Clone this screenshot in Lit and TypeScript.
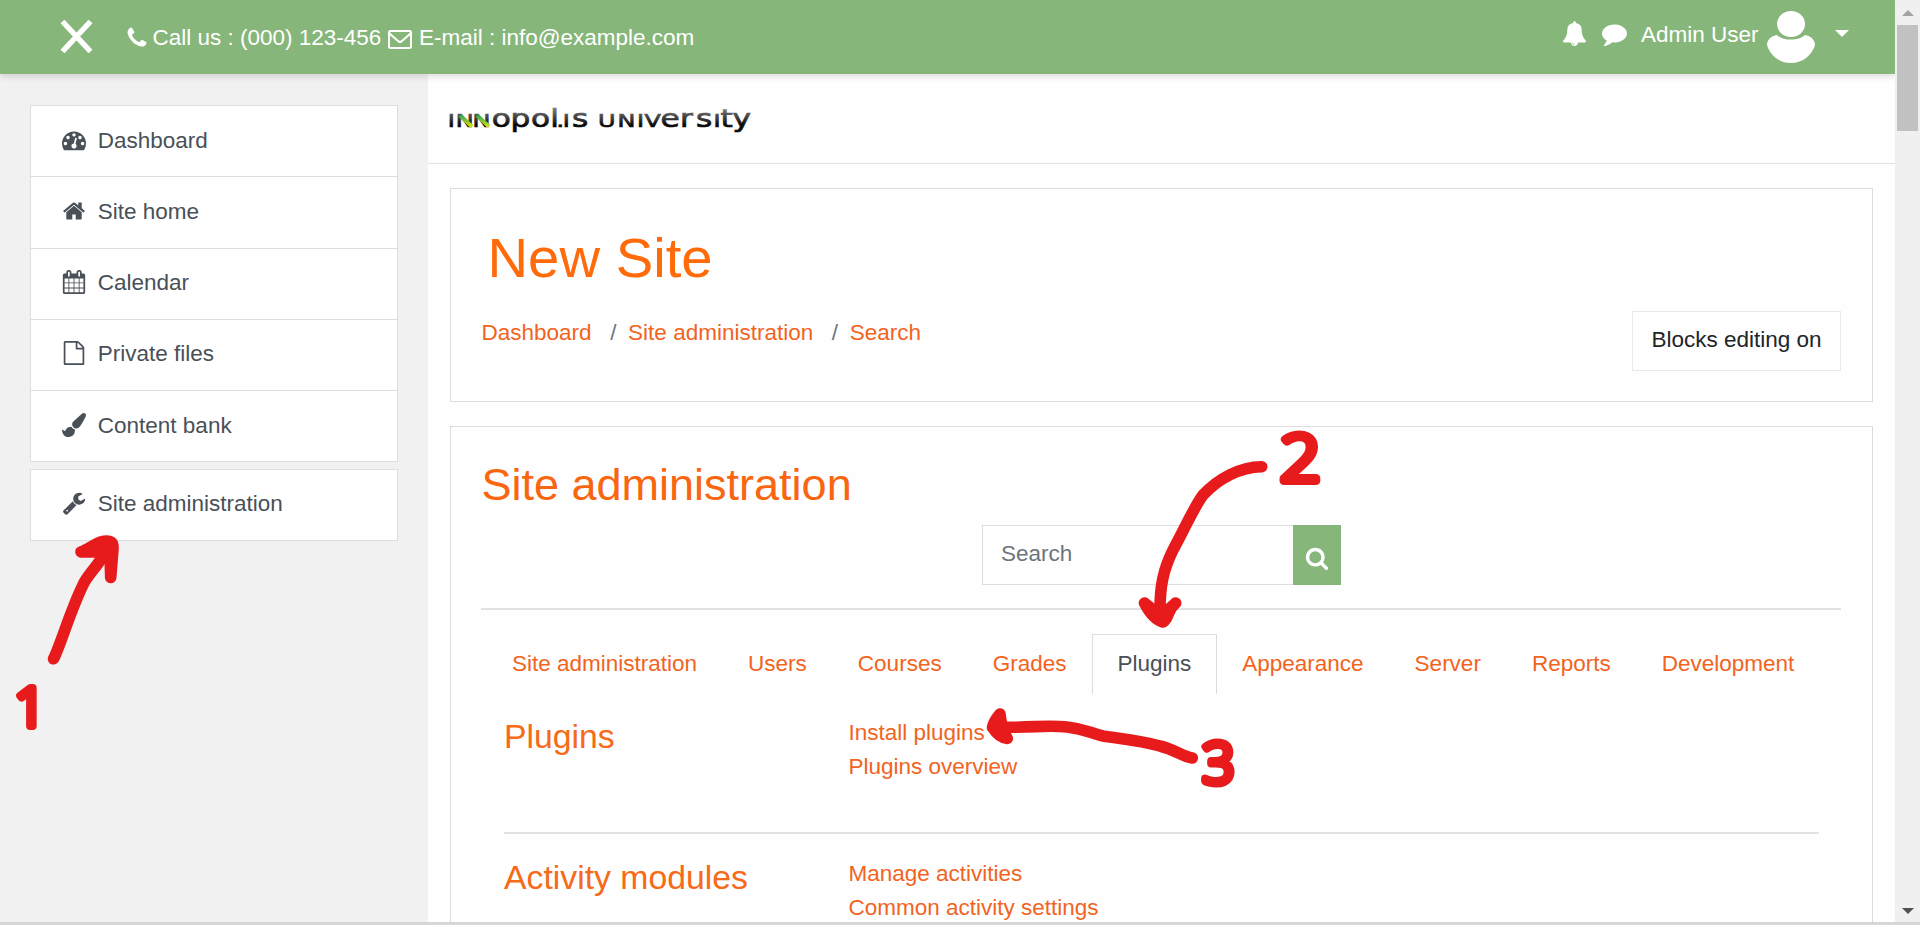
import { LitElement, html, svg, css } from "lit";
import { customElement, property } from "lit/decorators.js";

const ICONS: Record<string, string> = {
  dashboard:
    "M384 1152q0-53-37.5-90.5t-90.5-37.5-90.5 37.5-37.5 90.5 37.5 90.5 90.5 37.5 90.5-37.5 37.5-90.5zm192-448q0-53-37.5-90.5t-90.5-37.5-90.5 37.5-37.5 90.5 37.5 90.5 90.5 37.5 90.5-37.5 37.5-90.5zm428 481l101-382q6-26-7.5-48.5t-38.5-29.5-48 6.5-30 39.5l-101 382q-60 5-107 43.5t-63 98.5q-20 77 20 146t117 89 146-20 89-117q16-60-6-117t-72-91zm660-33q0-53-37.5-90.5t-90.5-37.5-90.5 37.5-37.5 90.5 37.5 90.5 90.5 37.5 90.5-37.5 37.5-90.5zm-640-640q0-53-37.5-90.5t-90.5-37.5-90.5 37.5-37.5 90.5 37.5 90.5 90.5 37.5 90.5-37.5 37.5-90.5zm448 192q0-53-37.5-90.5t-90.5-37.5-90.5 37.5-37.5 90.5 37.5 90.5 90.5 37.5 90.5-37.5 37.5-90.5zm320 448q0 261-141 483-19 29-54 29h-1402q-35 0-54-29-141-221-141-483 0-182 71-348t191-286 286-191 348-71 348 71 286 191 191 286 71 348z",
  home:
    "M1472 992v480q0 26-19 45t-45 19h-384v-384h-256v384h-384q-26 0-45-19t-19-45v-480q0-1 .5-3t.5-3l575-474 575 474q1 2 1 6zm223-69l-62 74q-8 9-21 11h-3q-13 0-21-7l-692-577-692 577q-12 8-24 7-13-2-21-11l-62-74q-8-10-7-23.5t11-21.5l719-599q32-26 76-26t76 26l244 204v-195q0-14 9-23t23-9h192q14 0 23 9t9 23v408l219 182q10 8 11 21.5t-7 23.5z",
  calendar:
    "M192 1664h288v-288h-288v288zm352 0h320v-288h-320v288zm-352-352h288v-320h-288v320zm352 0h320v-320h-320v320zm-352-384h288v-288h-288v288zm736 736h320v-288h-320v288zm-384-736h320v-288h-320v288zm768 736h288v-288h-288v288zm-384-352h320v-320h-320v320zm-352-864v-288q0-13-9.5-22.5t-22.5-9.5h-64q-13 0-22.5 9.5t-9.5 22.5v288q0 13 9.5 22.5t22.5 9.5h64q13 0 22.5-9.5t9.5-22.5zm736 864h288v-320h-288v320zm-384-384h320v-288h-320v288zm384 0h288v-288h-288v288zm32-480v-288q0-13-9.5-22.5t-22.5-9.5h-64q-13 0-22.5 9.5t-9.5 22.5v288q0 13 9.5 22.5t22.5 9.5h64q13 0 22.5-9.5t9.5-22.5zm384-64v1280q0 52-38 90t-90 38h-1408q-52 0-90-38t-38-90v-1280q0-52 38-90t90-38h128v-96q0-66 47-113t113-47h64q66 0 113 47t47 113v96h384v-96q0-66 47-113t113-47h64q66 0 113 47t47 113v96h128q52 0 90 38t38 90z",
  file:
    "M1596 380q28 28 48 76t20 88v1152q0 40-28 68t-68 28h-1344q-40 0-68-28t-28-68v-1600q0-40 28-68t68-28h896q40 0 88 20t76 48zm-444-244v376h376q-10-29-22-41l-313-313q-12-12-41-22zm384 1528v-1024h-416q-40 0-68-28t-28-68v-416h-768v1536h1280z",
  brush:
    "M1615 0q70 0 122.5 46.5t52.5 116.5q0 63-45 151-332 629-465 752-97 91-218 91-126 0-216.5-92.5t-90.5-219.5q0-128 92-212l638-579q59-54 130-54zm-909 1034q39 76 106.5 130t150.5 76l1 71q4 213-129.5 347t-348.5 134q-123 0-218-46.5t-152.5-127.5-86.5-183-29-220q7 5 41 30t62 44.5 59 36.5 46 17q41 0 55-37 25-66 57.5-112.5t69.5-76 88-47.5 103-25.5 125-10.5z",
  wrench:
    "M448 1472q0-26-19-45t-45-19-45 19-19 45 19 45 45 19 45-19 19-45zm644-420l-682 682q-37 37-90 37-52 0-91-37l-106-108q-38-36-38-90 0-53 38-91l681-681q39 98 114.5 173.5t173.5 114.5zm634-435q0 39-23 106-47 134-164.5 217.5t-258.5 83.5q-185 0-316.5-131.5t-131.5-316.5 131.5-316.5 316.5-131.5q58 0 121.5 16.5t107.5 46.5q16 11 16 28t-16 28l-293 169v224l193 107q5-3 79-48.5t135.5-81 70.5-35.5q15 0 23.5 10t8.5 25z",
  bell:
    "M912 1696q0-16-16-16-59 0-101.5-42.5t-42.5-101.5q0-16-16-16t-16 16q0 73 51.5 124.5t124.5 51.5q16 0 16-16zm816-288q0 52-38 90t-90 38h-448q0 106-75 181t-181 75-181-75-75-181h-448q-52 0-90-38t-38-90q50-42 91-88t85-119.5 74.5-158.5 50-206 19.5-260q0-152 117-282.5t307-158.5q-8-19-8-39 0-40 28-68t68-28 68 28 28 68q0 20-8 39 190 28 307 158.5t117 282.5q0 139 19.5 260t50 206 74.5 158.5 85 119.5 91 88z",
  comment:
    "M1792 896q0 174-120 321.5t-326 233-450 85.5q-70 0-145-8-198 175-460 242-49 14-114 22-17 2-30.5-9t-17.5-29v-1q-3-4-.5-12t2-10 4.5-9.5l6-9 7-8.5 8-9q7-8 31-34.5t34.5-38 31-39.5 32.5-51 27-59 26-76q-157-89-247.5-220t-90.5-281q0-130 71-248.5t191-204.5 286-136.5 348-50.5q244 0 450 85.5t326 233 120 321.5z",
  phone:
    "M1600 1240q0 27-10 70.5t-21 68.5q-21 50-122 106-94 51-186 51-27 0-53-3.5t-57.5-12.5-47-14.5-55.5-20.5-49-18q-98-35-175-83-127-79-264-216t-216-264q-48-77-83-175-3-9-18-49t-20.5-55.5-14.5-47-12.5-57.5-3.5-53q0-92 51-186 56-101 106-122 25-11 68.5-21t70.5-10q14 0 21 3 18 6 53 76 11 19 30 54t35 63.5 31 53.5q3 4 17.5 25t21.5 35.5 7 28.5q0 20-28.5 50t-62 55-62 53-28.5 46q0 9 5 22.5t8.5 20.5 14 24 11.5 19q76 137 174 235t235 174q2 1 19 11.5t24 14 20.5 8.5 22.5 5q18 0 46-28.5t53-62 55-62 50-28.5q14 0 28.5 7t35.5 21.5 25 17.5q25 15 53.5 31t63.5 35 54 30q70 35 76 53 3 7 3 21z",
  search:
    "M1216 832q0-185-131.5-316.5t-316.5-131.5-316.5 131.5-131.5 316.5 131.5 316.5 316.5 131.5 316.5-131.5 131.5-316.5zm512 832q0 52-38 90t-90 38q-54 0-90-38l-343-342q-179 124-399 124-143 0-273.5-55.5t-225-150-150-225-55.5-273.5 55.5-273.5 150-225 225-150 273.5-55.5 273.5 55.5 225 150 150 225 55.5 273.5q0 220-124 399l343 343q37 37 37 90z",
};

@customElement("ui-icon")
class UiIcon extends LitElement {
  @property() name = "";
  static styles = css`
    :host { display: block; flex: none; width: 24px; height: 24px; }
    svg { display: block; width: 100%; height: 100%; fill: currentColor; }
  `;
  render() {
    return html`<svg viewBox="0 0 1792 1792"><path d=${ICONS[this.name] ?? ""}></path></svg>`;
  }
}

const NAV_GROUPS = [
  [
    ["dashboard", "Dashboard"],
    ["home", "Site home"],
    ["calendar", "Calendar"],
    ["file", "Private files"],
    ["brush", "Content bank"],
  ],
  [["wrench", "Site administration"]],
];

const TABS = ["Site administration", "Users", "Courses", "Grades", "Plugins", "Appearance", "Server", "Reports", "Development"];

const SECTIONS = [
  { title: "Plugins", links: ["Install plugins", "Plugins overview"] },
  { title: "Activity modules", links: ["Manage activities", "Common activity settings"] },
];

// Wordmark letters: horizontal origin and letter; capitals are set at x-height.
const STRETCH = 1.3;
const WORDMARK: [number, string][] = [
  [447.7, "I"], [455.8, "N"], [472.6, "N"], [491.7, "o"], [510.5, "p"], [531, "o"], [550.3, "l"],
  [556.5, "."], [562.7, "I"], [572, "s"], [598, "U"], [617.5, "N"], [637, "I"], [644.5, "V"],
  [660.5, "e"], [680, "r"], [696, "s"], [713.5, "I"], [720.5, "t"], [732.5, "y"],
];

@customElement("app-root")
class AppRoot extends LitElement {
  static styles = css`
    * { box-sizing: border-box; }
    :host {
      display: grid;
      grid-template-columns: 1fr 25px;
      grid-template-rows: 922px 3px;
      position: relative;
      width: 100%;
      height: 925px;
      overflow: hidden;
      background: #fefefe;
      font: 22.5px/33.75px "Liberation Sans", Arial, sans-serif;
      color: #212529;
    }
    a { color: #f1641e; text-decoration: none; white-space: nowrap; }
    .page { display: flex; flex-direction: column; min-width: 0; overflow: hidden; }
    .topbar {
      display: flex;
      flex: none;
      height: 74px;
      padding: 0 46px 0 60px;
      background: #87b67b;
      color: #fff;
      box-shadow: 0 3px 6px rgba(0, 0, 0, 0.12);
      z-index: 1;
      white-space: nowrap;
    }
    .close { width: 33px; height: 33px; margin: 20px 31.5px 0 0; }
    .phone { width: 24px; height: 24px; margin: 25.5px 4px 0 0; }
    .topbar .contact { padding-top: 21.4px; }
    .mail { width: 24px; height: 19px; margin: 29.5px 7px 0 6.5px; }
    .grow { flex: 1; }
    .bell { width: 25px; height: 25px; margin: 20.5px 15px 0 0; }
    .comment { width: 25px; height: 25px; margin: 21px 13.5px 0 0; }
    .user { padding-top: 18px; }
    .avatar { width: 48px; height: 52px; margin: 11px 20px 0 8.5px; }
    .caret { width: 14px; height: 7px; margin-top: 30px; }
    .body { display: flex; flex: 1; min-height: 0; }
    .drawer {
      display: flex;
      flex-direction: column;
      gap: 6.5px;
      flex: none;
      width: 427.5px;
      padding: 31px 30px;
      background: #f1f1f1;
    }
    .group { border: 1px solid #dcdddf; background: #fff; }
    .item {
      display: flex;
      align-items: flex-start;
      height: 71.25px;
      padding: 17.5px 0 0 30.5px;
      color: #495057;
      border-top: 1px solid #dcdddf;
    }
    .item:first-child { border-top: 0; height: 70.25px; padding-top: 18px; }
    .item:only-child { padding-top: 17px; }
    .item ui-icon { margin: 4px 12.3px 0 0; }
    .main { flex: 1; min-width: 0; }
    .brand { height: 90px; border-bottom: 1px solid #dee2e6; padding: 21.5px 0 0 18.5px; }
    .brand svg { display: block; width: 306px; height: 50px; overflow: visible; }
    .wordmark { font-family: "DejaVu Sans", sans-serif; }
    .card { margin: 24px 22px 0 22px; border: 1px solid #dcdddf; padding: 0 31px 0 30.5px; }
    .heading { height: 214px; display: grid; grid-template-columns: 1fr auto; grid-template-rows: 122px auto; }
    h1, h2, h3 { margin: 0; font-weight: 400; color: #ff6a0a; white-space: nowrap; }
    h1 { grid-column: 1 / 3; font-size: 56.25px; line-height: 68px; padding: 35px 0 0 6.5px; }
    .crumbs { display: flex; gap: 11.7px; padding: 5.3px 0 0 0.5px; }
    .crumbs .sep { color: #6c757d; margin-left: 6.9px; }
    .button {
      width: 209px;
      height: 60px;
      border: 1px solid #e9e9ea;
      padding: 11px 0 0 18.5px;
      white-space: nowrap;
    }
    .admin { height: 560px; }
    h2 { font-size: 45px; line-height: 54px; padding: 31px 0 0 0.5px; height: 98px; color: #fa6610; }
    .searchbar { display: flex; width: 359px; height: 60px; margin-left: 500.5px; }
    .field { flex: 1; border: 1px solid #dcdddf; border-right: 0; padding: 11px 0 0 18.5px; color: #6c757d; }
    .go { width: 48px; background: #87b67b; color: #fff; padding: 20.5px 0 0 12px; }
    .go ui-icon { width: 24px; height: 24px; }
    .rule { height: 2px; background: #e2e2e3; }
    .rule.top { margin: 23px 0 24px; }
    .tabs { display: flex; margin-left: 5.5px; height: 60px; }
    .tab { padding: 12px 24.5px 0; border: 1px solid transparent; border-bottom: 0; }
    .tab.active { color: #495057; border-color: #dcdddf; }
    .section { display: grid; grid-template-columns: 344.5px 1fr; margin: 0 22px 0 23px; height: 117px; }
    .section + .rule { margin: 0 22px 22px 23px; }
    .section.first { margin-top: 21px; }
    h3 { font-size: 33.75px; line-height: 41px; color: #f66a18; padding-top: 0.5px; }
    .links { display: flex; flex-direction: column; padding-top: 1px; }
    .scroll { display: flex; flex-direction: column; align-items: center; background: #f0f0f0; padding: 10px 0 8px; }
    .scroll svg { display: block; width: 12px; height: 6px; }
    .thumb { width: 21px; height: 106px; margin-top: 9px; background: #c1c1c1; }
    .bottom { grid-column: 1 / 3; background: #d6d6d6; }
    .ink { position: absolute; inset: 0; width: 1920px; height: 925px; z-index: 2; pointer-events: none; }
    .ink path { fill: none; stroke: #e81b1c; stroke-width: 11.6; stroke-linecap: round; stroke-linejoin: round; }
    .ink path.tip { fill: #e81b1c; }
    .ink text { font-family: "Open Sans", sans-serif; font-weight: 300; fill: #e81b1c; stroke: #e81b1c; stroke-width: 8; stroke-linejoin: round; }
  `;

  private logo() {
    return html`<svg viewBox="446 95 306 50">
      <defs>
        <linearGradient id="metal" x1="0" y1="108" x2="0" y2="134" gradientUnits="userSpaceOnUse">
          <stop offset="0" stop-color="#777"></stop>
          <stop offset=".35" stop-color="#3a3a3a"></stop>
          <stop offset=".6" stop-color="#0a0a0a"></stop>
        </linearGradient>
        <linearGradient id="leaf" x1="0" y1="113" x2="0" y2="127" gradientUnits="userSpaceOnUse">
          <stop offset="0" stop-color="#1ba05a"></stop>
          <stop offset="1" stop-color="#e8ea10"></stop>
        </linearGradient>
      </defs>
      <text class="wordmark" transform="scale(${STRETCH} 1)" fill="url(#metal)" stroke="url(#metal)" stroke-width=".7" y="126.500">${WORDMARK.map(
        ([x, ch]) => svg`<tspan x=${x / STRETCH} font-size=${ch === ch.toUpperCase() ? 18.4 : 24}>${ch}</tspan>`
      )}</text>
      <path d="M460 114.500L472 125.500M477 114.500L489 125.500" fill="none" stroke="url(#leaf)" stroke-width="4"></path>
    </svg>`;
  }

  private annotations() {
    return svg`
      <path d="M53.500 658.800C60 647 72 605 85 581C92 570 101 562 107 549"></path>
      <path class="tip" d="M81 552C90 548.500 98 541 105 541C112 540.500 113.500 543 113 549L110.700 577.500L110 554L100 552Z"></path>
      <text x="15" y="726" font-size="53">1</text>
      <path d="M1261.700 466.700C1240 467 1219 478 1203 495C1194 507 1184 530 1173 550C1163 570 1160 587 1160 610"></path>
      <path class="tip" d="M1144.500 603C1149 612 1155 620 1163 622C1170 617 1166 611 1175.700 603L1161 616Z"></path>
      <text transform="translate(1280 481) scale(1.1 1)" font-size="65">2</text>
      <path d="M1192.300 758C1182 756.500 1176 750 1160 746C1137 739.500 1122 739 1103 736C1091 733.500 1086 729 1067 727C1048 725 1035 727.500 1003 727.300"></path>
      <path class="tip" d="M1000 714C995 720 993 724 992.500 727.500C996 733 1000 738 1007.300 738.500L1002 728Z"></path>
      <text x="1202.500" y="782.500" font-size="56">3</text>`;
  }

  render() {
    return html`
      <div class="page">
        <header class="topbar">
          <svg class="close" viewBox="0 0 33 33"><path d="M2.500 1.500L30.500 31.500M30.500 1.500L2.500 31.500" stroke="#fff" stroke-width="5.400"></path></svg>
          <ui-icon class="phone" name="phone"></ui-icon>
          <span class="contact">Call us : (000) 123-456</span>
          <svg class="mail" viewBox="0 0 24 19" fill="none" stroke="#fff" stroke-width="2"><rect x="1" y="1" width="22" height="17" rx="1.500"></rect><path d="M1.500 3.500L10 11Q12 12.800 14 11L22.500 3.500"></path></svg>
          <span class="contact">E-mail : info@example.com</span>
          <span class="grow"></span>
          <ui-icon class="bell" name="bell"></ui-icon>
          <ui-icon class="comment" name="comment"></ui-icon>
          <span class="user">Admin User</span>
          <svg class="avatar" viewBox="0 0 48 52" fill="#fff"><ellipse cx="24" cy="13" rx="14" ry="13"></ellipse><path d="M10 24C16 30 32 30 38 24C44 25 48 29 48 34C45 44 36 52 24 52C12 52 3 44 0 34C0 29 4 25 10 24Z"></path></svg>
          <svg class="caret" viewBox="0 0 14 7" fill="#fff"><path d="M0 0H14L7 7Z"></path></svg>
        </header>
        <div class="body">
          <nav class="drawer">
            ${NAV_GROUPS.map(
              (group) => html`<div class="group">
                ${group.map(([icon, label]) => html`<a class="item"><ui-icon name=${icon}></ui-icon><span>${label}</span></a>`)}
              </div>`
            )}
          </nav>
          <main class="main">
            <div class="brand">${this.logo()}</div>
            <section class="card heading">
              <h1>New Site</h1>
              <div class="crumbs">
                <a>Dashboard</a><span class="sep">/</span><a>Site administration</a><span class="sep">/</span><a>Search</a>
              </div>
              <div class="button">Blocks editing on</div>
            </section>
            <section class="card admin">
              <h2>Site administration</h2>
              <div class="searchbar">
                <div class="field">Search</div>
                <div class="go"><ui-icon name="search"></ui-icon></div>
              </div>
              <div class="rule top"></div>
              <div class="tabs">
                ${TABS.map((t) => html`<a class="tab ${t === "Plugins" ? "active" : ""}">${t}</a>`)}
              </div>
              ${SECTIONS.map(
                (s, i) => html`<div class="section ${i === 0 ? "first" : ""}">
                    <h3>${s.title}</h3>
                    <div class="links">${s.links.map((l) => html`<a>${l}</a>`)}</div>
                  </div>
                  ${i === 0 ? html`<div class="rule"></div>` : ""}`
              )}
            </section>
          </main>
        </div>
      </div>
      <div class="scroll">
        <svg viewBox="0 0 12 6"><path d="M0 6L6 0L12 6Z" fill="#a3a3a3"></path></svg>
        <div class="thumb"></div>
        <span class="grow"></span>
        <svg viewBox="0 0 12 6"><path d="M0 0L6 6L12 0Z" fill="#505050"></path></svg>
      </div>
      <div class="bottom"></div>
      <svg class="ink" viewBox="0 0 1920 925">${this.annotations()}</svg>
    `;
  }
}
